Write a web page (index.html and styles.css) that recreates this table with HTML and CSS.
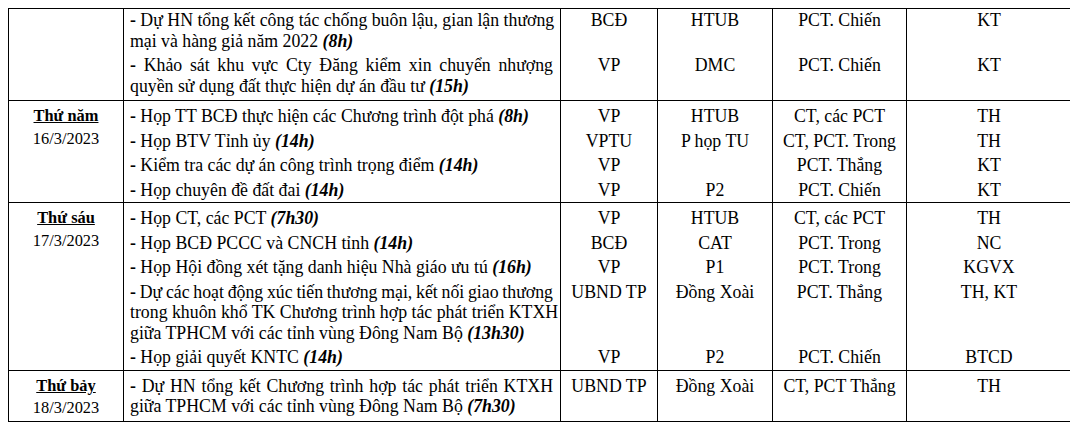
FILE: index.html
```html
<!DOCTYPE html>
<html lang="vi">
<head>
<meta charset="utf-8">
<title>Lịch công tác</title>
<link rel="stylesheet" href="styles.css">
</head>
<body>
<table class="sched">
  <colgroup>
    <col class="c-day"><col class="c-item"><col class="c-loc"><col class="c-prep"><col class="c-lead"><col class="c-dept">
  </colgroup>
  <tbody>
    <tr class="first cont">
      <td class="day" rowspan="2"></td>
      <td class="item"><span class="jl"><b>-</b> Dự HN tổng kết công tác chống buôn lậu, gian lận thương</span><span class="ll">mại và hàng giả năm 2022 <b><i>(8h)</i></b></span></td>
      <td>BCĐ</td><td>HTUB</td><td>PCT. Chiến</td><td>KT</td>
    </tr>
    <tr class="last">
      <td class="item"><span class="jl"><b>-</b> Khảo sát khu vực Cty Đăng kiểm xin chuyển nhượng</span><span class="ll">quyền sử dụng đất thực hiện dự án đầu tư <b><i>(15h)</i></b></span></td>
      <td>VP</td><td>DMC</td><td>PCT. Chiến</td><td>KT</td>
    </tr>

    <tr class="first">
      <td class="day" rowspan="4"><div class="dn">Thứ năm</div><div class="dd">16/3/2023</div></td>
      <td class="item"><b>-</b> Họp TT BCĐ thực hiện các Chương trình đột phá <b><i>(8h)</i></b></td>
      <td>VP</td><td>HTUB</td><td>CT, các PCT</td><td>TH</td>
    </tr>
    <tr>
      <td class="item"><b>-</b> Họp BTV Tỉnh ủy <b><i>(14h)</i></b></td>
      <td>VPTU</td><td>P họp TU</td><td>CT, PCT. Trong</td><td>TH</td>
    </tr>
    <tr>
      <td class="item"><b>-</b> Kiểm tra các dự án công trình trọng điểm <b><i>(14h)</i></b></td>
      <td>VP</td><td></td><td>PCT. Thắng</td><td>KT</td>
    </tr>
    <tr class="last">
      <td class="item"><b>-</b> Họp chuyên đề đất đai <b><i>(14h)</i></b></td>
      <td>VP</td><td>P2</td><td>PCT. Chiến</td><td>KT</td>
    </tr>

    <tr class="first">
      <td class="day" rowspan="5"><div class="dn">Thứ sáu</div><div class="dd">17/3/2023</div></td>
      <td class="item"><b>-</b> Họp CT, các PCT <b><i>(7h30)</i></b></td>
      <td>VP</td><td>HTUB</td><td>CT, các PCT</td><td>TH</td>
    </tr>
    <tr>
      <td class="item"><b>-</b> Họp BCĐ PCCC và CNCH tỉnh <b><i>(14h)</i></b></td>
      <td>BCĐ</td><td>CAT</td><td>PCT. Trong</td><td>NC</td>
    </tr>
    <tr>
      <td class="item"><b>-</b> Họp Hội đồng xét tặng danh hiệu Nhà giáo ưu tú <b><i>(16h)</i></b></td>
      <td>VP</td><td>P1</td><td>PCT. Trong</td><td>KGVX</td>
    </tr>
    <tr>
      <td class="item"><span class="jl tight"><b>-</b> Dự các hoạt động xúc tiến thương mại, kết nối giao thương</span><span class="jl">trong khuôn khổ TK Chương trình hợp tác phát triển KTXH</span><span class="ll">giữa TPHCM với các tỉnh vùng Đông Nam Bộ <b><i>(13h30)</i></b></span></td>
      <td>UBND TP</td><td>Đồng Xoài</td><td>PCT. Thắng</td><td>TH, KT</td>
    </tr>
    <tr class="last">
      <td class="item"><b>-</b> Họp giải quyết KNTC <b><i>(14h)</i></b></td>
      <td>VP</td><td>P2</td><td>PCT. Chiến</td><td>BTCD</td>
    </tr>

    <tr class="first last end">
      <td class="day"><div class="dn">Thứ bảy</div><div class="dd">18/3/2023</div></td>
      <td class="item"><span class="jl"><b>-</b> Dự HN tổng kết Chương trình hợp tác phát triển KTXH</span><span class="ll">giữa TPHCM với các tỉnh vùng Đông Nam Bộ <b><i>(7h30)</i></b></span></td>
      <td>UBND TP</td><td>Đồng Xoài</td><td>CT, PCT Thắng</td><td>TH</td>
    </tr>
  </tbody>
</table>
</body>
</html>
```

FILE: styles.css
```css
html, body {
  background: #fff;
}
body {
  margin: 8px;
  font-family: "Liberation Serif", "Times New Roman", serif;
  font-size: 17.8px;
  line-height: 20.5px;
  color: #000;
}
.sched {
  border-collapse: collapse;
  table-layout: fixed;
  width: 1063px;
}
.c-day { width: 115px; }
.c-item { width: 437px; }
.c-loc { width: 97px; }
.c-prep { width: 115px; }
.c-lead { width: 134px; }
.c-dept { width: 165px; }
.sched td {
  border-left: 1px solid #000;
  border-right: 1px solid #000;
  padding: 4px 6px 0 6px;
  vertical-align: top;
  text-align: center;
  white-space: nowrap;
}
.sched tr.first td {
  border-top: 1px solid #000;
  padding-top: 5px;
}
.sched tr.cont td {
  padding-top: 1px;
}
.sched tr.last td {
  padding-bottom: 2px;
}
.sched tr.cont + tr.last td {
  padding-bottom: 4px;
}
.sched tr.end td {
  border-bottom: 1px solid #000;
}
.sched td.day {
  padding-top: 5px;
  text-align: center;
  font-size: 16.4px;
}
.sched td.item {
  text-align: left;
  padding-left: 6px;
  padding-right: 7px;
}
.jl {
  display: block;
  text-align: justify;
  text-align-last: justify;
}
.tight {
  word-spacing: -1.2px;
}
.ll {
  display: block;
}
.dn {
  font-weight: bold;
  text-decoration: underline;
}
.dd {
  margin-top: 2px;
}
```
